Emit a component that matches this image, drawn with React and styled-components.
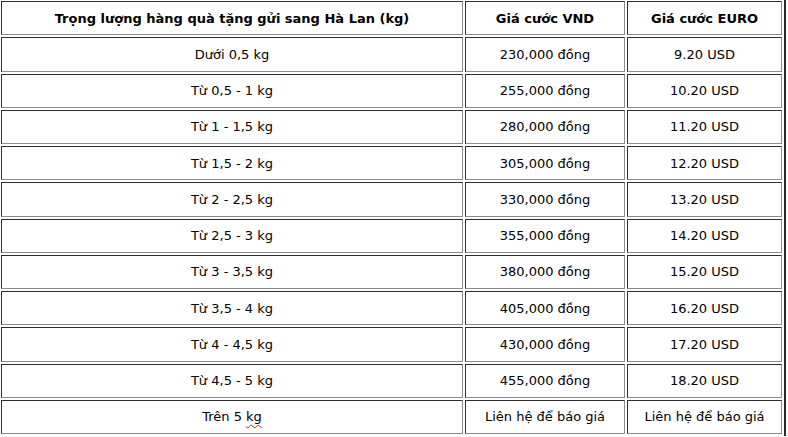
import styled, { createGlobalStyle } from 'styled-components';

const GlobalStyle = createGlobalStyle`
  body {
    margin: 0;
    background: #fff;
    font-family: "DejaVu Sans", Verdana, sans-serif;
    color: #000;
  }
`;

const Table = styled.table`
  border-collapse: separate;
  border-spacing: 2px;
  margin: -1px 0 0 -1px;
  border-right: 2px solid #2b2b2b;
  table-layout: fixed;
`;

const Cell = styled.td`
  width: ${(p) => p.$w}px;
  height: 34.25px;
  box-sizing: border-box;
  padding: 0;
  text-align: center;
  vertical-align: middle;
  font-size: 13px;
  font-weight: ${(p) => (p.$head ? 700 : 400)};
  border-top: 1px solid #2e2e2e;
  border-left: 1px solid #2e2e2e;
  border-bottom: 1px solid #8c8c8c;
  border-right: 1px solid #8c8c8c;
`;

const Misspelled = styled.span`
  text-decoration: underline wavy #e02020;
  text-decoration-thickness: 1px;
  text-underline-offset: 3px;
`;

const widths = [462, 160, 155];

const rows = [
  ['Dưới 0,5 kg', '230,000 đồng', '9.20 USD'],
  ['Từ 0,5 - 1 kg', '255,000 đồng', '10.20 USD'],
  ['Từ 1 - 1,5 kg', '280,000 đồng', '11.20 USD'],
  ['Từ 1,5 - 2 kg', '305,000 đồng', '12.20 USD'],
  ['Từ 2 - 2,5 kg', '330,000 đồng', '13.20 USD'],
  ['Từ 2,5 - 3 kg', '355,000 đồng', '14.20 USD'],
  ['Từ 3 - 3,5 kg', '380,000 đồng', '15.20 USD'],
  ['Từ 3,5 - 4 kg', '405,000 đồng', '16.20 USD'],
  ['Từ 4 - 4,5 kg', '430,000 đồng', '17.20 USD'],
  ['Từ 4,5 - 5 kg', '455,000 đồng', '18.20 USD'],
];

export default function App() {
  return (
    <>
      <GlobalStyle />
      <Table>
        <tbody>
          <tr>
            <Cell $head $w={widths[0]}>Trọng lượng hàng quà tặng gửi sang Hà Lan (kg)</Cell>
            <Cell $head $w={widths[1]}>Giá cước VND</Cell>
            <Cell $head $w={widths[2]}>Giá cước EURO</Cell>
          </tr>
          {rows.map((r) => (
            <tr key={r[0]}>
              {r.map((c, i) => (
                <Cell key={i} $w={widths[i]}>{c}</Cell>
              ))}
            </tr>
          ))}
          <tr>
            <Cell $w={widths[0]}>
              Trên 5 <Misspelled>kg</Misspelled>
            </Cell>
            <Cell $w={widths[1]}>Liên hệ để báo giá</Cell>
            <Cell $w={widths[2]}>Liên hệ để báo giá</Cell>
          </tr>
        </tbody>
      </Table>
    </>
  );
}
